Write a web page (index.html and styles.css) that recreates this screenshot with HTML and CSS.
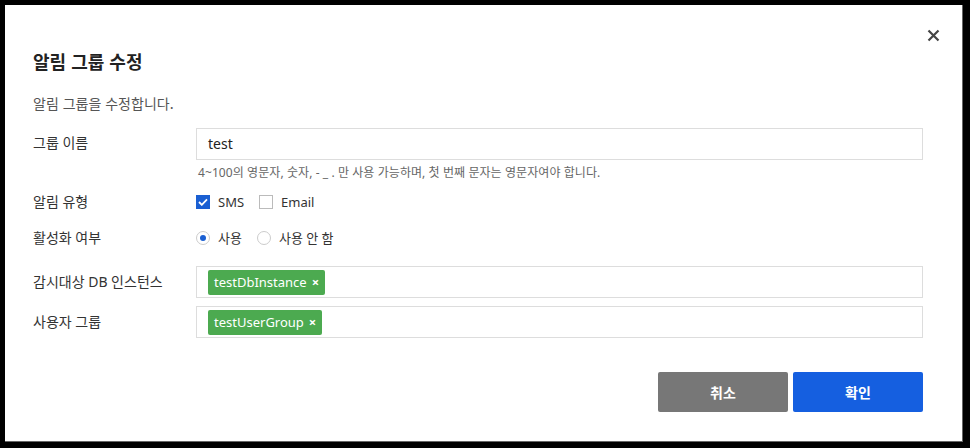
FILE: index.html
```html
<!DOCTYPE html>
<html lang="ko">
<head>
<meta charset="utf-8">
<link rel="stylesheet" href="styles.css">
</head>
<body>
<div class="modal">
  <button class="close" aria-label="닫기">
    <svg width="13" height="13" viewBox="0 0 13 13"><path d="M1.5 1.5 L11.5 11.5 M11.5 1.5 L1.5 11.5" stroke="#444" stroke-width="2.2" fill="none"/></svg>
  </button>
  <h1 class="title">알림 그룹 수정</h1>
  <p class="desc">알림 그룹을 수정합니다.</p>
  <div class="form">
    <div class="row row-name">
      <div class="label">그룹 이름</div>
      <div class="field">
        <div class="input">test</div>
        <div class="help">4~100의 영문자, 숫자, - _ . 만 사용 가능하며, 첫 번째 문자는 영문자여야 합니다.</div>
      </div>
    </div>
    <div class="row row-type">
      <div class="label">알림 유형</div>
      <div class="field options">
        <span class="opt"><span class="check on"><svg width="10" height="8" viewBox="0 0 10 8"><path d="M1 4 L3.8 6.8 L9 1.3" stroke="#fff" stroke-width="1.8" fill="none"/></svg></span>SMS</span>
        <span class="opt"><span class="check"></span>Email</span>
      </div>
    </div>
    <div class="row row-active">
      <div class="label">활성화 여부</div>
      <div class="field options">
        <span class="opt"><span class="radio on"></span>사용</span>
        <span class="opt"><span class="radio"></span>사용 안 함</span>
      </div>
    </div>
    <div class="row row-db">
      <div class="label">감시대상 DB 인스턴스</div>
      <div class="field">
        <div class="tagbox"><span class="tag">testDbInstance<span class="x">×</span></span></div>
      </div>
    </div>
    <div class="row row-user">
      <div class="label">사용자 그룹</div>
      <div class="field">
        <div class="tagbox"><span class="tag">testUserGroup<span class="x">×</span></span></div>
      </div>
    </div>
  </div>
  <div class="actions">
    <button class="btn cancel">취소</button>
    <button class="btn ok">확인</button>
  </div>
</div>
</body>
</html>
```
FILE: styles.css
```css
* { box-sizing: border-box; }
html, body { margin: 0; }
body {
  background: #000;
  padding: 5px;
  font-family: "Noto Sans", "Noto Sans CJK KR", sans-serif;
  color: #333;
}
.modal {
  position: relative;
  width: 958px;
  height: 437px;
  background: #fff;
  border-right: 1px solid #666;
  border-bottom: 1px solid #666;
  padding: 43px 39px 0 28px;
}
.close {
  position: absolute;
  top: 24px;
  right: 22px;
  width: 13px;
  height: 13px;
  padding: 0;
  border: 0;
  background: none;
  display: flex;
}
.title {
  margin: 0;
  font-size: 18px;
  line-height: 26px;
  font-weight: 700;
  color: #222;
  font-family: "Noto Sans CJK KR", sans-serif;
}
.desc {
  margin: 19px 0 0;
  font-size: 14px;
  line-height: 20px;
  color: #555;
  font-family: "Noto Sans CJK KR", sans-serif;
}
.form { margin-top: 15px; }
.row {
  display: grid;
  grid-template-columns: 163px 1fr;
  align-items: start;
}
.label {
  font-size: 14px;
  line-height: 20px;
  color: #333;
}
.row-name .label { padding-top: 5px; }
.input {
  height: 32px;
  border: 1px solid #ddd;
  padding: 0 11px;
  font-size: 14px;
  line-height: 30px;
  color: #222;
}
.help {
  margin-top: 5px;
  padding-left: 2px;
  font-size: 12px;
  line-height: 16px;
  color: #666;
  letter-spacing: 0.08px;
}
.row-type { margin-top: 9px; align-items: center; height: 24px; }
.row-active { margin-top: 12px; align-items: center; height: 24px; }
.row-db { margin-top: 16px; align-items: center; }
.row-user { margin-top: 8px; align-items: center; }
.options {
  display: flex;
  align-items: center;
  font-size: 13px;
  color: #333;
}
.opt { display: flex; align-items: center; gap: 8px; line-height: 20px; }
.opt + .opt { margin-left: 15px; }
.check {
  width: 14px;
  height: 14px;
  border: 1px solid #bbb;
  background: #fff;
  display: flex;
  align-items: center;
  justify-content: center;
}
.check.on { background: #1a5fd2; border-color: #1a5fd2; }
.radio {
  width: 14px;
  height: 14px;
  border: 1px solid #ccc;
  border-radius: 50%;
  display: flex;
  align-items: center;
  justify-content: center;
}
.radio.on::after {
  content: "";
  width: 6px;
  height: 6px;
  border-radius: 50%;
  background: #1a5fd2;
}
.tagbox {
  height: 32px;
  border: 1px solid #ddd;
  padding: 0 11px;
  display: flex;
  align-items: center;
}
.tag {
  height: 25px;
  background: #4caa50;
  color: #fff;
  border-radius: 2px;
  padding: 0 6px;
  font-size: 13px;
  line-height: 25px;
  display: inline-flex;
  align-items: center;
}
.tag .x { margin-left: 5px; font-size: 13px; font-weight: 700; }
.actions {
  margin-top: 34px;
  display: flex;
  justify-content: flex-end;
  gap: 5px;
}
.btn {
  width: 130px;
  height: 40px;
  border: 0;
  border-radius: 2px;
  color: #fff;
  font-size: 14px;
  font-weight: 700;
  font-family: "Noto Sans CJK KR", sans-serif;
}
.cancel { background: #777; }
.ok { background: #155fe0; }
```
